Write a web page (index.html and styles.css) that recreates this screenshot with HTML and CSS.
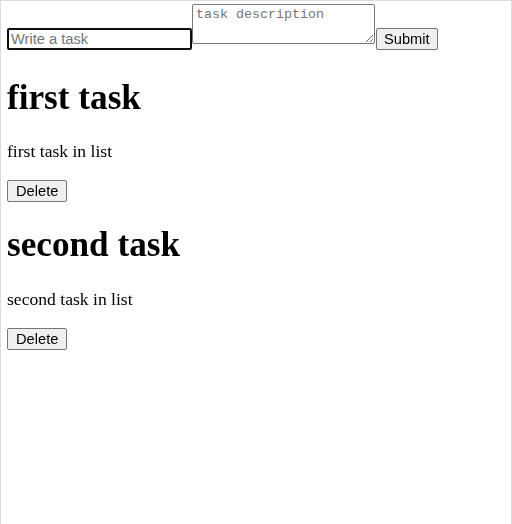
FILE: index.html
```html
<!DOCTYPE html>
<html>
<head>
<meta charset="utf-8">
<link rel="stylesheet" href="styles.css">
</head>
<body class="page">
<form class="task-form"><input class="task-input" type="text" placeholder="Write a task" autofocus><textarea class="task-desc" placeholder="task description"></textarea><button class="btn btn-submit" type="button">Submit</button></form>
<div class="task">
<h1 class="task-title">first task</h1>
<p class="task-text">first task in list</p>
<button class="btn" type="button">Delete</button>
</div>
<div class="task">
<h1 class="task-title">second task</h1>
<p class="task-text">second task in list</p>
<button class="btn" type="button">Delete</button>
</div>
</body>
</html>
```

FILE: styles.css
```css
html {
  height: 100%;
  box-sizing: border-box;
  border: 1px solid #dcdcdc;
  border-bottom: none;
}
.page {
  margin: 3px 6px;
  font-family: "Liberation Serif", serif;
  font-size: 17.6px;
  color: #000;
}
.task-form {
  margin: 0;
  padding-bottom: 4px;
}
.task-input {
  font-family: "Liberation Sans", sans-serif;
  font-size: 14.67px;
  width: 185px;
  height: 22px;
  box-sizing: border-box;
  border: 2px solid #101010;
  border-radius: 2px;
  padding: 1px 2px;
  margin: 0;
  outline: none;
}
.task-input::placeholder {
  color: #757575;
}
.task-desc {
  font-family: "Liberation Mono", monospace;
  font-size: 13.33px;
  width: 183px;
  height: 40px;
  box-sizing: border-box;
  border: 1px solid #767676;
  border-radius: 2px;
  padding: 2px 3px;
  margin: 0;
  vertical-align: baseline;
}
.task-desc::placeholder {
  color: #757575;
}
.btn {
  font-family: "Liberation Sans", sans-serif;
  font-size: 14.67px;
  height: 22px;
  box-sizing: border-box;
  padding: 1px 8px;
  margin: 0;
  border: 1px solid #767676;
  border-radius: 2px;
  background: #efefef;
  color: #000;
}
.btn-submit {
  margin-left: 1px;
  padding: 1px 7px;
}
.task-title {
  font-size: 35.2px;
  font-weight: bold;
  margin: 23.6px 0;
}
.task-text {
  margin: 17.6px 0;
}
```
